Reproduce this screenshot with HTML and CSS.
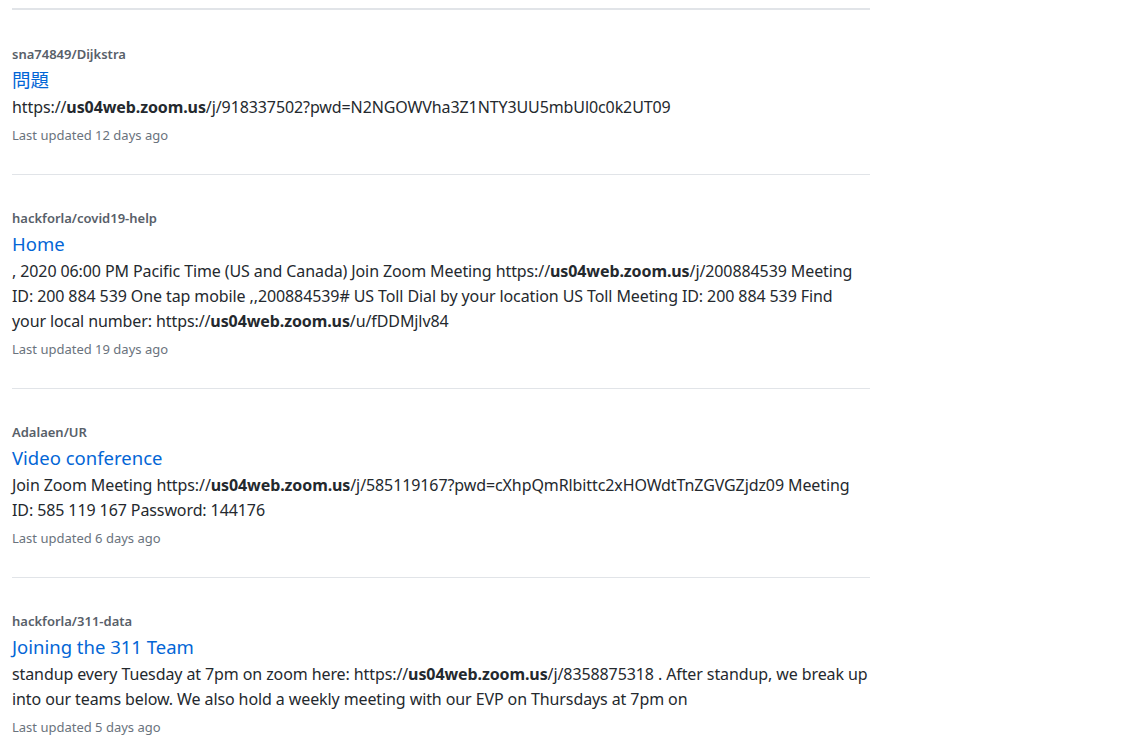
FILE: index.html
```html
<!DOCTYPE html>
<html lang="en">
<head>
<meta charset="utf-8">
<title>Wiki search results</title>
<link rel="stylesheet" href="styles.css">
</head>
<body>
<div id="wiki_search_results">
	<div class="hit">
		<div class="hit_repo">sna74849/Dijkstra</div>
		<div class="hit_title"><a href="#">問題</a></div>
		<p class="hit_body">https://<em>us04web.zoom.us</em>/j/918337502?pwd=N2NGOWVha3Z1NTY3UU5mbUl0c0k2UT09</p>
		<div class="hit_updated">Last updated 12 days ago</div>
	</div>
	<div class="hit">
		<div class="hit_repo">hackforla/covid19-help</div>
		<div class="hit_title"><a href="#">Home</a></div>
		<p class="hit_body">, 2020 06:00 PM Pacific Time (US and Canada) Join Zoom Meeting https://<em>us04web.zoom.us</em>/j/200884539 Meeting ID: 200 884 539 One tap mobile ,,200884539# US Toll Dial by your location US Toll Meeting ID: 200 884 539 Find your local number: https://<em>us04web.zoom.us</em>/u/fDDMjlv84</p>
		<div class="hit_updated">Last updated 19 days ago</div>
	</div>
	<div class="hit">
		<div class="hit_repo">Adalaen/UR</div>
		<div class="hit_title"><a href="#">Video conference</a></div>
		<p class="hit_body">Join Zoom Meeting https://<em>us04web.zoom.us</em>/j/585119167?pwd=cXhpQmRlbittc2xHOWdtTnZGVGZjdz09 Meeting ID: 585 119 167 Password: 144176</p>
		<div class="hit_updated">Last updated 6 days ago</div>
	</div>
	<div class="hit">
		<div class="hit_repo">hackforla/311-data</div>
		<div class="hit_title"><a href="#">Joining the 311 Team</a></div>
		<p class="hit_body">standup every Tuesday at 7pm on zoom here: https://<em>us04web.zoom.us</em>/j/8358875318 . After standup, we break up into our teams below. We also hold a weekly meeting with our EVP on Thursdays at 7pm on</p>
		<div class="hit_updated">Last updated 5 days ago</div>
	</div>
</div>
</body>
</html>
```
FILE: styles.css
```css
body{margin:0;background:#fff;color:#24292e;font:16px/25px "Noto Sans", "Noto Sans CJK JP", sans-serif;letter-spacing:-0.1px;}
#wiki_search_results{width:858px;margin:8px 0 0 12px;border-top:2px solid #e1e4e8;}
.hit{padding:34px 0 30px;border-top:1px solid #e1e4e8;}
.hit:first-child{padding-top:35px;border-top:0;}
.hit_repo{font-size:13px;line-height:18px;font-weight:600;color:#586069;letter-spacing:0;}
.hit_title{margin-top:2px;font-size:18.5px;line-height:30px;letter-spacing:0;}
.hit_title a{color:#0366d6;text-decoration:none;}
.hit_body{margin:0;word-wrap:break-word;}
.hit_body em{font-style:normal;font-weight:700;}
.hit_updated{margin-top:6px;font-size:13px;line-height:18px;color:#6a737d;letter-spacing:0;}
```
